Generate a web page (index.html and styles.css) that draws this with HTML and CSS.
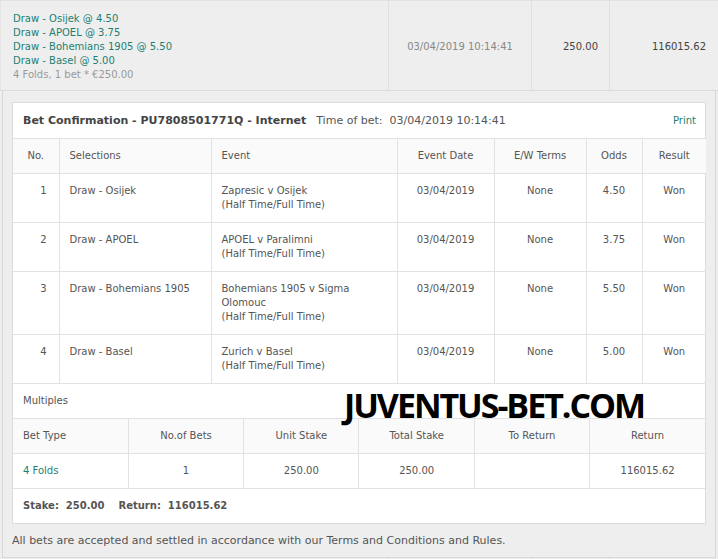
FILE: index.html
```html
<!DOCTYPE html>
<html>
<head>
<meta charset="utf-8">
<link rel="stylesheet" href="styles.css">
</head>
<body>
<div class="bets">
  <div class="summary">
    <div class="cell sel">
      <div class="teal">Draw - Osijek @ 4.50</div>
      <div class="teal">Draw - APOEL @ 3.75</div>
      <div class="teal">Draw - Bohemians 1905 @ 5.50</div>
      <div class="teal">Draw - Basel @ 5.00</div>
      <div class="muted">4 Folds, 1 bet * €250.00</div>
    </div>
    <div class="cell date">03/04/2019 10:14:41</div>
    <div class="cell stake">250.00</div>
    <div class="cell ret">116015.62</div>
  </div>
  <div class="detail">
    <div class="panel">
      <div class="panel-head">
        <div class="title"><b>Bet Confirmation - PU7808501771Q - Internet</b><span class="time">Time of bet:&nbsp; 03/04/2019 10:14:41</span></div>
        <a class="print">Print</a>
      </div>
      <table class="grid sels">
        <colgroup>
          <col class="c-no"><col class="c-sel"><col class="c-ev"><col class="c-date"><col class="c-ew"><col class="c-odds"><col class="c-res">
        </colgroup>
        <thead>
          <tr><th class="ctr">No.</th><th>Selections</th><th>Event</th><th class="ctr">Event Date</th><th class="ctr">E/W Terms</th><th class="ctr">Odds</th><th class="ctr">Result</th></tr>
        </thead>
        <tbody>
          <tr><td class="num">1</td><td>Draw - Osijek</td><td>Zapresic v Osijek<br>(Half Time/Full Time)</td><td class="ctr">03/04/2019</td><td class="ctr">None</td><td class="ctr">4.50</td><td class="ctr">Won</td></tr>
          <tr><td class="num">2</td><td>Draw - APOEL</td><td>APOEL v Paralimni<br>(Half Time/Full Time)</td><td class="ctr">03/04/2019</td><td class="ctr">None</td><td class="ctr">3.75</td><td class="ctr">Won</td></tr>
          <tr><td class="num">3</td><td>Draw - Bohemians 1905</td><td>Bohemians 1905 v Sigma<br>Olomouc<br>(Half Time/Full Time)</td><td class="ctr">03/04/2019</td><td class="ctr">None</td><td class="ctr">5.50</td><td class="ctr">Won</td></tr>
          <tr><td class="num">4</td><td>Draw - Basel</td><td>Zurich v Basel<br>(Half Time/Full Time)</td><td class="ctr">03/04/2019</td><td class="ctr">None</td><td class="ctr">5.00</td><td class="ctr">Won</td></tr>
        </tbody>
      </table>
      <div class="multiples">Multiples</div>
      <table class="grid mult">
        <thead>
          <tr><th>Bet Type</th><th class="ctr">No.of Bets</th><th class="ctr">Unit Stake</th><th class="ctr">Total Stake</th><th class="ctr">To Return</th><th class="ctr">Return</th></tr>
        </thead>
        <tbody>
          <tr><td class="teal">4 Folds</td><td class="ctr">1</td><td class="ctr">250.00</td><td class="ctr">250.00</td><td class="ctr"></td><td class="ctr">116015.62</td></tr>
        </tbody>
      </table>
      <div class="totals"><b>Stake:&nbsp; 250.00</b><b class="gap">Return:&nbsp; 116015.62</b></div>
    </div>
    <div class="footer">All bets are accepted and settled in accordance with our Terms and Conditions and Rules.</div>
  </div>
  <div class="summary next">
    <div class="cell sel"></div>
    <div class="cell date"></div>
    <div class="cell stake"></div>
    <div class="cell ret"></div>
  </div>
</div>
<div class="watermark">JUVENTUS-BET.COM</div>
</body>
</html>
```

FILE: styles.css
```css
html, body {
  margin: 0;
  padding: 0;
  background: #eeeeee;
}
body {
  font-family: "DejaVu Sans", Verdana, sans-serif;
  font-size: 10px;
  line-height: 14px;
  color: #555;
  position: relative;
  width: 718px;
  height: 559px;
  overflow: hidden;
}
.bets {
  width: 718px;
}
.summary {
  display: flex;
  height: 89px;
  border-top: 1px solid #e2e2e2;
  border-bottom: 1px solid #dcdcdc;
}
.summary .cell {
  display: flex;
  flex-direction: column;
  justify-content: center;
  box-sizing: border-box;
  padding-top: 2px;
}
.summary .sel {
  width: 388px;
  padding-left: 12px;
  border-left: 1px solid #e4e4e4;
}
.summary .date {
  width: 143px;
  border-left: 1px solid #e0e0e0;
  align-items: center;
  color: #888;
}
.summary .stake {
  width: 78px;
  border-left: 1px solid #e0e0e0;
  align-items: flex-end;
  padding-right: 11px;
  color: #444;
}
.summary .ret {
  width: 109px;
  border-left: 1px solid #e0e0e0;
  align-items: flex-end;
  padding-right: 12px;
  color: #444;
}
.summary.next {
  height: 20px;
  border-bottom: none;
  border-top: none;
}
.teal { color: #1d7f72; }
.muted { color: #9a9a9a; }
.detail {
  margin: 0 2px;
  border-left: 1px solid #d8d8d8;
  border-right: 1px solid #d8d8d8;
  border-bottom: 1px solid #d8d8d8;
  padding: 11px 9px 0 9px;
}
.panel {
  background: #fff;
  border: 1px solid #dcdcdc;
}
.panel-head {
  display: flex;
  justify-content: space-between;
  align-items: center;
  height: 35px;
  padding: 0 9px 0 10px;
  font-size: 11px;
  border-bottom: 1px solid #e2e2e2;
}
.title b {
  color: #444;
}
.time {
  margin-left: 10px;
  color: #555;
}
.print {
  color: #1d7f72;
  font-size: 10px;
}
.grid {
  width: 100%;
  border-collapse: collapse;
  table-layout: fixed;
}
.grid th, .grid td {
  border: 1px solid #e2e2e2;
  padding: 10px 10px 10px 10px;
  text-align: left;
  vertical-align: top;
  font-weight: normal;
}
.grid thead tr th { border-top: none; }
.grid th:first-child, .grid td:first-child { border-left: none; }
.grid th:last-child, .grid td:last-child { border-right: none; }
.grid th {
  background: #fafafa;
  color: #555;
}
.c-no { width: 46px; }
.c-sel { width: 152px; }
.c-ev { width: 186px; }
.c-date { width: 97px; }
.c-ew { width: 92px; }
.c-odds { width: 56px; }
.c-res { width: 64px; }
.grid .ctr { text-align: center; }
.grid .num { text-align: right; padding-right: 12px; }
.multiples {
  padding: 10px 10px 10px 10px;
  border-bottom: 1px solid #e2e2e2;
}
.mult th, .mult td { padding: 10px 10px; }
.mult tbody tr:last-child td { border-bottom: none; }
.totals {
  padding: 10px 10px;
  border-top: 1px solid #e2e2e2;
  color: #555;
}
.totals .gap { margin-left: 14px; }
.footer {
  font-size: 11px;
  padding: 10px 0 9px 0;
  color: #555;
}
.watermark {
  position: absolute;
  left: 344px;
  top: 383px;
  font-family: "Open Sans", sans-serif;
  font-weight: 700;
  font-size: 34px;
  line-height: 44px;
  letter-spacing: -2.05px;
  color: #000;
}
```
